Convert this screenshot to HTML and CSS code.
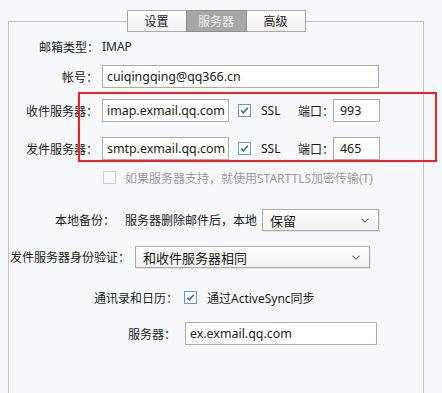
FILE: index.html
```html
<!DOCTYPE html>
<html lang="zh-CN">
<head>
<meta charset="utf-8">
<title>服务器设置</title>
<link rel="stylesheet" href="styles.css">
</head>
<body>
<fieldset class="panel">
  <legend class="tabs">
    <span class="tab">设置</span>
    <span class="tab tab-active">服务器</span>
    <span class="tab">高级</span>
  </legend>
  <div class="form">
    <div class="row row-type">
      <span class="lbl w90">邮箱类型：</span>
      <span class="value">IMAP</span>
    </div>
    <div class="row row-account">
      <span class="lbl w89">帐号：</span>
      <div class="field w277">cuiqingqing@qq366.cn</div>
    </div>
    <div class="row row-in">
      <span class="lbl w89">收件服务器：</span>
      <div class="field w127">imap.exmail.qq.com</div>
      <span class="cb cb-on ml9"><svg viewBox="0 0 11 11" width="11" height="11"><path d="M2.2 5.6 L4.4 7.8 L8.8 2.8" fill="none" stroke="#2f6db5" stroke-width="1.6"/></svg></span>
      <span class="ssl">SSL</span>
      <span class="port-lbl">端口：</span>
      <div class="field w47">993</div>
    </div>
    <div class="row row-out">
      <span class="lbl w89">发件服务器：</span>
      <div class="field w127">smtp.exmail.qq.com</div>
      <span class="cb cb-on ml9"><svg viewBox="0 0 11 11" width="11" height="11"><path d="M2.2 5.6 L4.4 7.8 L8.8 2.8" fill="none" stroke="#2f6db5" stroke-width="1.6"/></svg></span>
      <span class="ssl">SSL</span>
      <span class="port-lbl">端口：</span>
      <div class="field w47">465</div>
    </div>
    <div class="row row-tls">
      <span class="cb cb-off"></span>
      <span class="tls-text">如果服务器支持，就使用STARTTLS加密传输(T)</span>
    </div>
    <div class="row row-backup">
      <span class="lbl w106">本地备份：</span>
      <span class="backup-text">服务器删除邮件后，本地</span>
      <div class="select w117"><span>保留</span><svg class="chev" viewBox="0 0 8 5" width="8" height="5"><path d="M0.5 0.8 L4 4 L7.5 0.8" fill="none" stroke="#7a7a7a" stroke-width="1.2"/></svg></div>
    </div>
    <div class="row row-auth">
      <span class="lbl w121">发件服务器身份验证：</span>
      <div class="select w235 ml14"><span>和收件服务器相同</span><svg class="chev" viewBox="0 0 8 5" width="8" height="5"><path d="M0.5 0.8 L4 4 L7.5 0.8" fill="none" stroke="#7a7a7a" stroke-width="1.2"/></svg></div>
    </div>
    <div class="row row-sync">
      <span class="lbl w169">通讯录和日历：</span>
      <span class="cb cb-on ml6"><svg viewBox="0 0 11 11" width="11" height="11"><path d="M2.2 5.6 L4.4 7.8 L8.8 2.8" fill="none" stroke="#2f6db5" stroke-width="1.6"/></svg></span>
      <span class="sync-text">通过ActiveSync同步</span>
    </div>
    <div class="row row-server">
      <span class="lbl w167">服务器：</span>
      <div class="field w192 ml9">ex.exmail.qq.com</div>
    </div>
  </div>
</fieldset>
<div class="highlight"></div>
</body>
</html>
```

FILE: styles.css
```css
html, body {
  margin: 0;
  padding: 0;
}
body {
  position: relative;
  height: 393px;
  overflow: hidden;
  background: #f7f8fc;
  color: #1b1b1b;
  font-family: "Noto Sans", "Noto Sans CJK SC", sans-serif;
  font-size: 12px;
}

.panel {
  margin: 10px 18px 0 8px;
  padding: 0;
  min-width: 0;
  height: 400px;
  border: 1px solid #c4c4c4;
  border-bottom: none;
}

.tabs {
  margin: 0 auto;
  padding: 0;
  display: flex;
}
.tab {
  box-sizing: border-box;
  width: 60px;
  height: 22px;
  display: flex;
  align-items: center;
  justify-content: center;
  border: 1px solid #a8a8a8;
  background: linear-gradient(#ffffff, #efefef);
  color: #222;
  font-size: 12px;
}
.tab + .tab {
  margin-left: -1px;
}
.tab-active {
  width: 61px;
  background: #a7a7a7;
  border-color: #8e8e8e;
  color: #ececec;
  position: relative;
  z-index: 1;
}

.form {
  display: flex;
  flex-direction: column;
}
.row {
  display: flex;
  align-items: center;
  height: 23px;
  white-space: nowrap;
}
.row-type { margin-top: 3px; }
.row-account { margin-top: 7px; }
.row-in { margin-top: 11px; }
.row-out { margin-top: 15px; }
.row-tls { margin-top: 6px; padding-left: 94px; }
.row-backup { margin-top: 20px; height: 22px; }
.row-auth { margin-top: 15px; height: 22px; }
.row-sync { margin-top: 18px; }
.row-server { margin-top: 13px; }

.lbl {
  flex: none;
  text-align: right;
  color: #1b1b1b;
}
.w89 { width: 89px; }
.w90 { width: 90px; }
.w106 { width: 106px; }
.w121 { width: 121px; }
.w167 { width: 167px; }
.w169 { width: 169px; }

.value { margin-left: 3px; }

.field {
  box-sizing: border-box;
  flex: none;
  height: 23px;
  margin-left: 4px;
  padding: 0 4px;
  border: 1px solid #adadad;
  background: #ffffff;
  font-size: 12.4px;
  line-height: 21px;
  overflow: hidden;
}
.w277 { width: 277px; }
.w127 { width: 127px; }
.w47 { width: 47px; margin-left: 0; padding-left: 6px; }
.w192 { width: 192px; }
.ml9 { margin-left: 9px; }
.ml6 { margin-left: 6px; }
.ml14 { margin-left: 14px; }

.cb {
  box-sizing: border-box;
  flex: none;
  width: 13px;
  height: 13px;
  display: flex;
  align-items: center;
  justify-content: center;
}
.cb-on {
  border: 1px solid #6f96c8;
  background: #ffffff;
}
.cb-off {
  border: 1px solid #cdcdcd;
  background: #f6f6f6;
}

.ssl {
  width: 37px;
  margin-left: 10px;
}
.port-lbl {
  width: 35px;
}

.tls-text {
  margin-left: 9px;
  color: #9b9b9b;
}

.backup-text {
  margin-left: 10px;
  width: 132px;
}
.select {
  box-sizing: border-box;
  flex: none;
  height: 22px;
  margin-left: 5px;
  padding: 0 9px 0 7px;
  display: flex;
  align-items: center;
  justify-content: space-between;
  border: 1px solid #ababab;
  background: linear-gradient(#fdfdfd, #f1f1f1);
  box-shadow: 1px 1px 0 #e3e3e3;
  font-size: 13px;
}
.w117 { width: 117px; }
.w235 { width: 235px; }
.chev { flex: none; }

.sync-text {
  margin-left: 10px;
}

.highlight {
  position: absolute;
  left: 78px;
  top: 92px;
  width: 359px;
  height: 70px;
  box-sizing: border-box;
  border: 2px solid #f32222;
  pointer-events: none;
}
```
